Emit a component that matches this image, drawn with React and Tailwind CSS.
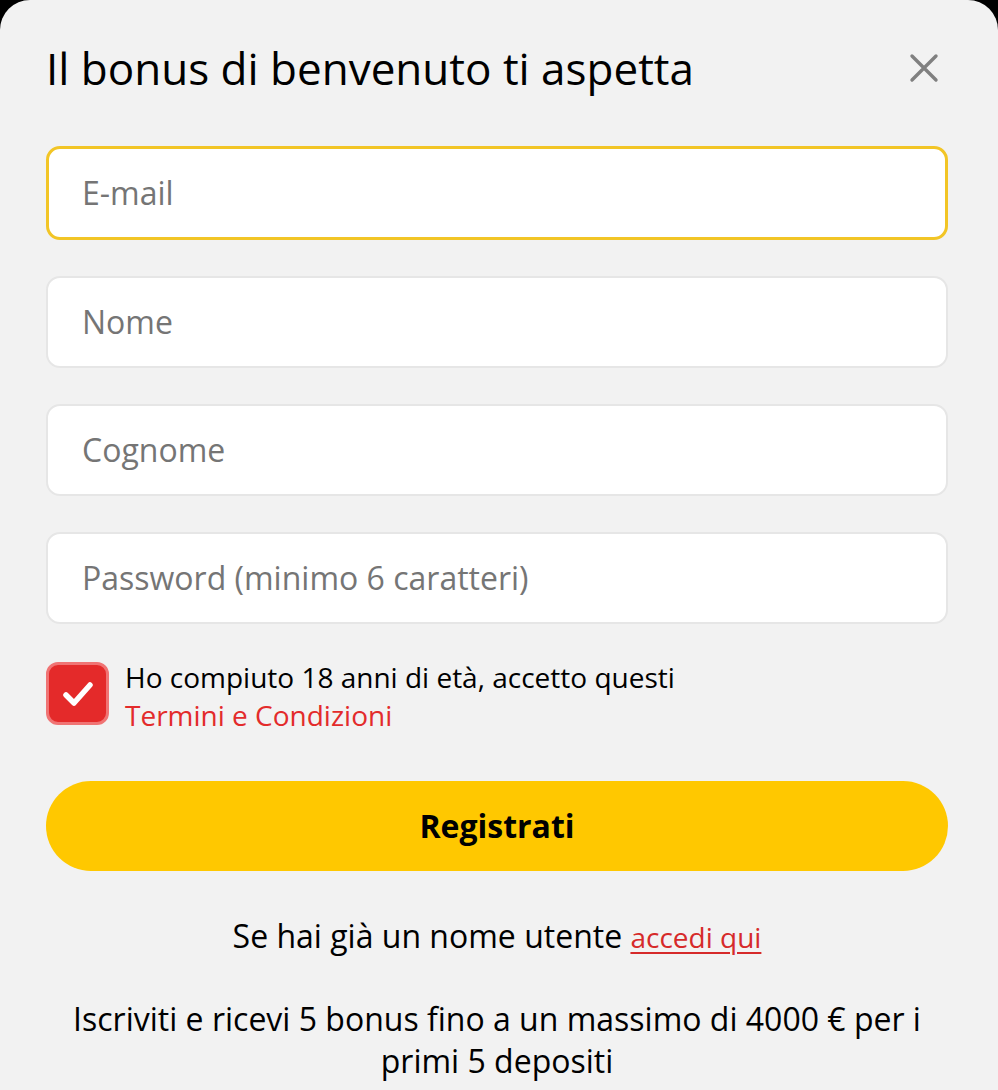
import React from "react";

export default function App() {
  return (
    <div className="w-[998px] h-[1090px] bg-black overflow-hidden" style={{ fontFamily: '"Open Sans", sans-serif' }}>
      <div className="w-[998px] h-[1120px] bg-[#f2f2f2] rounded-[30px] pl-[46px] pr-[50px] pt-[40px]">
        <div className="flex items-center justify-between h-[56px]">
          <h1 className="text-[44px] leading-[56px] text-black font-normal">Il bonus di benvenuto ti aspetta</h1>
          <button className="w-[40px] h-[40px] flex items-center justify-center mr-[4px]">
            <svg width="30" height="30" viewBox="0 0 30 30">
              <path d="M3 3 L27 27 M27 3 L3 27" stroke="#808080" strokeWidth="3.4" strokeLinecap="round" />
            </svg>
          </button>
        </div>
        <form className="mt-[50px] flex flex-col gap-[36px]">
          <div className="h-[94px] rounded-[14px] border-[3px] border-[#f2c526] bg-white flex items-center pl-[33px]">
            <span className="text-[32px] text-[#757575]">E-mail</span>
          </div>
          {["Nome", "Cognome", "Password (minimo 6 caratteri)"].map((t) => (
            <div key={t} className="h-[92px] rounded-[14px] border-2 border-[#e6e6e6] bg-white flex items-center pl-[34px]">
              <span className="text-[32px] text-[#757575]">{t}</span>
            </div>
          ))}
        </form>
        <div className="mt-[38px] flex items-start">
          <div className="w-[63px] h-[63px] shrink-0 rounded-[12px] bg-[#e42a2a] border-[3px] border-[#f07474] flex items-center justify-center">
            <svg width="34" height="28" viewBox="0 0 34 28">
              <path d="M5 15 L13 23 L29 5" fill="none" stroke="white" strokeWidth="5.5" strokeLinecap="round" strokeLinejoin="round" />
            </svg>
          </div>
          <div className="ml-[16px] -mt-[4px] text-[28px] leading-[38px] text-black">
            <div>Ho compiuto 18 anni di età, accetto questi</div>
            <div className="text-[#e32b2b]">Termini e Condizioni</div>
          </div>
        </div>
        <button className="mt-[47px] w-full h-[90px] rounded-full bg-[#ffc800] text-[32px] font-bold text-black flex items-center justify-center">
          Registrati
        </button>
        <p className="mt-[44px] text-center text-[32px] leading-[42px] text-black">
          Se hai già un nome utente <a className="text-[28px] text-[#d62a2a] underline decoration-2 underline-offset-[4px]">accedi qui</a>
        </p>
        <p className="mt-[40px] text-center text-[32px] leading-[42px] text-black px-[20px]">
          Iscriviti e ricevi 5 bonus fino a un massimo di 4000 € per i primi 5 depositi
        </p>
      </div>
    </div>
  );
}
